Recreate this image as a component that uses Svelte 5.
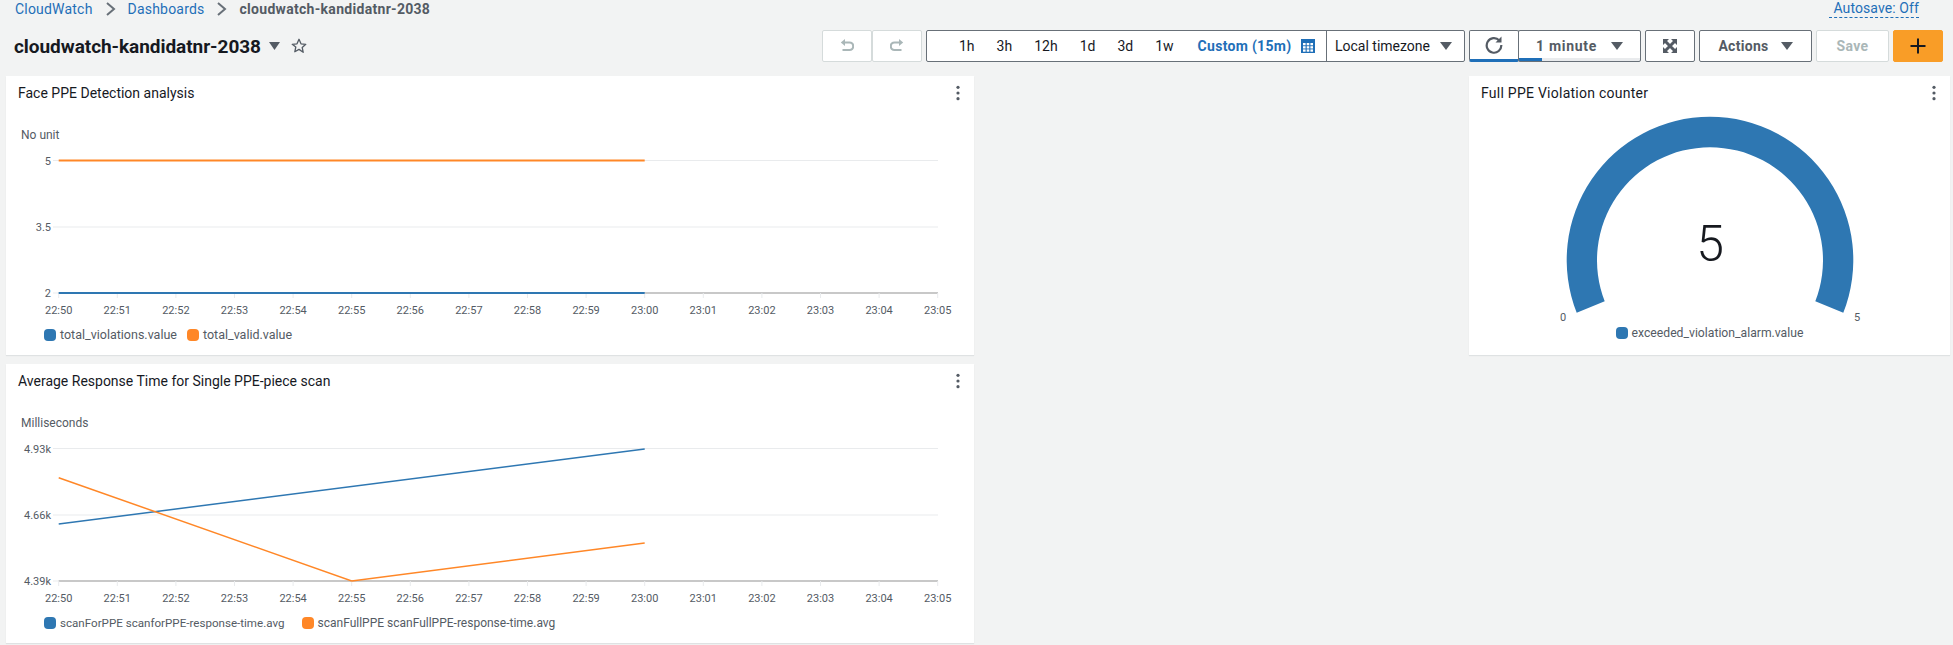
<script>
  const minutes = ['22:50','22:51','22:52','22:53','22:54','22:55','22:56','22:57','22:58','22:59','23:00','23:01','23:02','23:03','23:04','23:05'];
  const x0 = 52.7, step = 58.6;
  const tx = (i) => x0 + i * step;
  const charts = [
    {
      title: 'Face PPE Detection analysis', unit: 'No unit', ticks: ['5', '3.5', '2'], sw: 2, size: 'wide',
      series: [
        { cls: 'blue', pts: `${tx(0)},217 ${tx(10)},217` },
        { cls: 'orange', pts: `${tx(0)},84.5 ${tx(10)},84.5` }
      ],
      legend: [{ c: 'blue', t: 'total_violations.value' }, { c: 'orange', t: 'total_valid.value' }]
    },
    {
      title: 'Average Response Time for Single PPE-piece scan', unit: 'Milliseconds', ticks: ['4.93k', '4.66k', '4.39k'], sw: 1.5, size: 'narrow',
      series: [
        { cls: 'blue', pts: `${tx(0)},160 ${tx(10)},85` },
        { cls: 'orange', pts: `${tx(0)},113.7 ${tx(5)},217 ${tx(10)},179` }
      ],
      legend: [{ c: 'blue', t: 'scanForPPE scanforPPE-response-time.avg' }, { c: 'orange', t: 'scanFullPPE scanFullPPE-response-time.avg' }]
    }
  ];
  const gridY = [84.5, 151, 217];
  const times = ['1h','3h','12h','1d','3d','1w'];
</script>

{#snippet kebab()}
  <svg class="kebab" width="6" height="18" viewBox="0 0 6 18"><circle cx="3" cy="3.3" r="1.6"/><circle cx="3" cy="9" r="1.6"/><circle cx="3" cy="14.7" r="1.6"/></svg>
{/snippet}

{#snippet chart(c)}
  <section class="card">
    <header class="card-head"><h2>{c.title}</h2>{@render kebab()}</header>
    <svg class="plot" width="968" height="208" viewBox="0 36 968 208">
      <text class="unit" x="15" y="63">{c.unit}</text>
      {#each gridY as y, i}
        <line class="grid" x1="47" x2="932" y1={y} y2={y} />
        <text class="tick" x="45" y={y + 4} text-anchor="end">{c.ticks[i]}</text>
      {/each}
      <line class="axis" x1={x0} x2="932" y1="217" y2="217" />
      {#each minutes as m, i}
        <line class="grid" x1={tx(i)} x2={tx(i)} y1="217" y2="222" />
        <text class="tick" x={tx(i)} y="238" text-anchor="middle">{m}</text>
      {/each}
      {#each c.series as s}
        <polyline class={s.cls} points={s.pts} fill="none" stroke-width={c.sw} />
      {/each}
    </svg>
    <div class="legend {c.size}">
      {#each c.legend as l}
        <span class="item {l.c}"><i class={l.c}></i>{l.t}</span>
      {/each}
    </div>
  </section>
{/snippet}

<div class="page">
  <div class="crumbs">
    <nav>
      <a href="#a">CloudWatch</a>
      <svg width="11" height="16" viewBox="0 0 11 16"><path d="M2 2l7 6-7 6" fill="none" stroke="#687078" stroke-width="2"/></svg>
      <a href="#b">Dashboards</a>
      <svg width="11" height="16" viewBox="0 0 11 16"><path d="M2 2l7 6-7 6" fill="none" stroke="#687078" stroke-width="2"/></svg>
      <span class="here">cloudwatch-kandidatnr-2038</span>
    </nav>
    <a class="autosave" href="#c">Autosave: Off</a>
  </div>

  <div class="bar">
    <h1>cloudwatch-kandidatnr-2038</h1>
    <svg class="caret" width="11" height="8" viewBox="0 0 11 8"><path d="M0 0h11L5.500 8z" fill="#545b64"/></svg>
    <svg class="star" width="16" height="16" viewBox="0 0 16 16"><path d="M8 1.300l2 4.500 4.800.5-3.600 3.200 1 4.800L8 11.400l-4.200 2.400 1-4.800L1.200 6.300 6 5.800z" fill="none" stroke="#545b64" stroke-width="1.300" stroke-linejoin="round"/></svg>

    <div class="tools">
      <div class="pair">
        <button class="btn off sq" aria-label="Undo">
          <svg width="14" height="14" viewBox="0 0 14 14"><path d="M5 0L.8 3.500 5 7z" fill="#aab7b8"/><path d="M4 3.500h5.500a3.600 3.600 0 0 1 0 7.500H2.500" fill="none" stroke="#aab7b8" stroke-width="2.200"/></svg>
        </button>
        <button class="btn off sq" aria-label="Redo">
          <svg width="14" height="14" viewBox="0 0 14 14"><path d="M9 0l4.200 3.500L9 7z" fill="#aab7b8"/><path d="M10 3.500H4.500a3.600 3.600 0 0 0 0 7.500h7" fill="none" stroke="#aab7b8" stroke-width="2.200"/></svg>
        </button>
      </div>
      <div class="group">
        <div class="times">
          {#each times as t}<span>{t}</span>{/each}
          <b>Custom (15m)</b>
          <svg width="14" height="14" viewBox="0 0 14 14"><rect width="14" height="14" fill="#1f6fb8"/><g fill="#fff"><rect x="2" y="4" width="2.600" height="2.300"/><rect x="5.700" y="4" width="2.600" height="2.300"/><rect x="9.400" y="4" width="2.600" height="2.300"/><rect x="2" y="7.200" width="2.600" height="2.300"/><rect x="5.700" y="7.200" width="2.600" height="2.300"/><rect x="9.400" y="7.200" width="2.600" height="2.300"/><rect x="2" y="10.400" width="2.600" height="2.300"/><rect x="5.700" y="10.400" width="2.600" height="2.300"/><rect x="9.400" y="10.400" width="2.600" height="2.300"/></g></svg>
        </div>
        <div class="tz">Local timezone
          <svg width="12" height="8" viewBox="0 0 12 8"><path d="M0 0h12L6 8z" fill="#545b64"/></svg>
        </div>
      </div>
      <div class="pair">
        <button class="btn sq prog" aria-label="Refresh">
          <svg width="18" height="18" viewBox="0 0 18 18"><path d="M14.300 4.400A7.300 7.300 0 1 0 16.300 9" fill="none" stroke="#545b64" stroke-width="2.200"/><path d="M16.500 0.500v6h-6z" fill="#545b64"/></svg>
        </button>
        <button class="btn strong minute">1 minute
          <svg width="12" height="8" viewBox="0 0 12 8"><path d="M0 0h12L6 8z" fill="#545b64"/></svg>
        </button>
      </div>
      <button class="btn full" aria-label="Full screen">
        <svg width="14" height="14" viewBox="0 0 14 14"><g fill="#545b64"><path d="M0 0h6L0 6zM14 0v6L8 0zM0 14V8l6 6zM14 14H8l6-6z"/></g><path d="M1.500 1.500l11 11M12.500 1.500l-11 11" stroke="#545b64" stroke-width="3"/></svg>
      </button>
      <button class="btn strong actions">Actions
        <svg width="12" height="8" viewBox="0 0 12 8"><path d="M0 0h12L6 8z" fill="#545b64"/></svg>
      </button>
      <button class="btn off strong save">Save</button>
      <button class="btn add" aria-label="Add widget">
        <svg width="16" height="16" viewBox="0 0 16 16"><path d="M8 .5v15M.5 8h15" stroke="#16191f" stroke-width="2"/></svg>
      </button>
    </div>
  </div>

  <main class="board">
    {@render chart(charts[0])}
    <section class="card gauge">
      <header class="card-head"><h2>Full PPE Violation counter</h2>{@render kebab()}</header>
      <svg class="plot" width="481" height="214" viewBox="0 36 481 214">
        <path d="M107.700 236.700A143.300 143.300 0 1 1 374.300 236.700L346.300 225.300A113 113 0 1 0 135.700 225.300Z" fill="#2e77b2"/>
        <text class="value" x="241" y="185" text-anchor="middle">5</text>
        <text class="tick" x="94" y="245" text-anchor="middle">0</text>
        <text class="tick" x="388" y="245" text-anchor="middle">5</text>
      </svg>
      <div class="legend center">
        <span class="item"><i class="blue"></i>exceeded_violation_alarm.value</span>
      </div>
    </section>
    {@render chart(charts[1])}
  </main>
</div>

<style>
  :global(body) { margin: 0; background: #f2f3f3; }
  .page {
    width: 1953px; height: 645px; overflow: hidden;
    font-family: Roboto, "Noto Sans", sans-serif; color: #16191f;
  }
  .crumbs {
    height: 20px; display: flex; justify-content: space-between; align-items: center;
    padding: 0 34px 0 15px; font-size: 14px; letter-spacing: 0.2px; margin-top: -1px;
  }
  .crumbs nav { display: flex; align-items: center; gap: 12px; }
  a { color: #1f6fb8; text-decoration: none; }
  .here { color: #545b64; font-weight: 700; letter-spacing: 0.3px; }
  .autosave { border-bottom: 1px dashed #1f6fb8; padding: 0 0 1px 4px; letter-spacing: 0.1px; }
  .bar { display: flex; align-items: center; height: 32px; margin-top: 11px; padding-left: 14px; }
  h1 { margin: 0; font-size: 19px; font-weight: 700; letter-spacing: -0.05px; }
  .caret { margin-left: 8px; }
  .star { margin-left: 11px; }
  .tools { margin-left: auto; display: flex; gap: 4px; padding-right: 10px; height: 32px; }
  .pair { display: flex; }
  .btn {
    box-sizing: border-box; height: 32px; background: #fff; border: 1px solid #687078; border-radius: 2px;
    display: flex; align-items: center; justify-content: center; padding: 0; font: inherit; font-size: 14px; color: #545b64;
  }
  .strong { font-weight: 700; letter-spacing: 0.3px; }
  .off { border-color: #d5dbdb; color: #aab7b8; }
  .sq { width: 50px; }
  .group { display: flex; height: 32px; box-sizing: border-box; border: 1px solid #687078; border-radius: 2px; background: #fff; font-size: 14px; }
  .times { width: 400px; box-sizing: border-box; display: flex; align-items: center; gap: 22px; padding-left: 32px; border-right: 1px solid #687078; }
  .times b { color: #1f6fb8; font-weight: 700; letter-spacing: 0.3px; margin-left: 2px; margin-right: -12px; }
  .tz { width: 137px; box-sizing: border-box; display: flex; align-items: center; justify-content: space-between; padding: 0 12px 0 8px; }
  .prog { border-bottom: 3px solid #1f6fb8; }
  .minute {
    width: 123px; gap: 14px; margin-left: -1px; letter-spacing: 0.7px;
    background: linear-gradient(#1f6fb8, #1f6fb8) bottom left / 23px 3px no-repeat, linear-gradient(#e9ebed, #e9ebed) bottom / 100% 3px no-repeat;
    background-color: #fff;
  }
  .full { width: 50px; }
  .actions { width: 113px; gap: 12px; }
  .save { width: 73px; }
  .add { width: 50px; background: #f99d27; border-color: #f99d27; }
  .board {
    display: grid; grid-template-columns: 968px 1fr 481px; grid-template-rows: 279px 279px;
    row-gap: 9px; padding: 14px 3px 0 6px;
  }
  .card { background: #fff; box-shadow: 0 1px 1px rgba(0, 28, 36, 0.08); }
  .gauge { grid-column: 3; }
  .gauge h2 { letter-spacing: 0.25px; }
  .card-head { height: 36px; box-sizing: border-box; display: flex; justify-content: space-between; align-items: flex-start; padding: 8px 13px 0 12px; }
  h2 { margin: 0; font-size: 14px; font-weight: 400; line-height: 18px; }
  .kebab { fill: #545b64; }
  .plot { display: block; }
  .unit { font-size: 12px; fill: #545b64; }
  .tick { font-size: 11px; fill: #545b64; }
  .value { font-size: 50px; font-weight: 300; fill: #16191f; }
  .grid { stroke: #e9ebed; stroke-width: 1; }
  .axis { stroke: #c8c8c8; stroke-width: 2; }
  polyline.blue { stroke: #2e77b2; }
  polyline.orange { stroke: #ff8727; }
  .legend { display: flex; gap: 10px; margin-top: 8px; padding-left: 38px; font-size: 12px; line-height: 14px; color: #545b64; }
  .legend.wide { font-size: 12.5px; }
  .legend.narrow { font-size: 11.6px; gap: 17px; }
  .legend.narrow .item.orange { font-size: 12px; }
  .legend.center { justify-content: center; padding: 0; margin-top: 0; font-size: 12.2px; }
  .item { display: flex; align-items: center; gap: 4px; }
  .item i { width: 12px; height: 12px; border-radius: 4px; }
  i.blue { background: #2e77b2; }
  i.orange { background: #ff8727; }
</style>
